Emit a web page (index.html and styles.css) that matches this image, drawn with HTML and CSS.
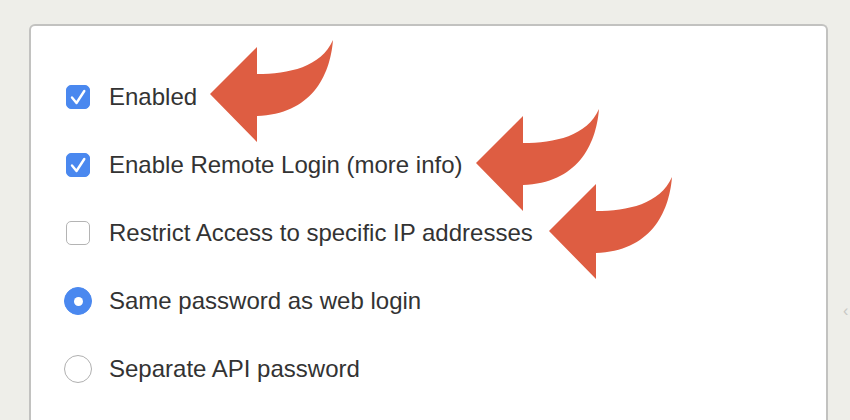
FILE: index.html
```html
<!DOCTYPE html>
<html lang="en">
  <head>
    <meta charset="UTF-8" />
    <title>Remote Login Settings</title>
    <link rel="stylesheet" href="styles.css">
  </head>
  <body>
    <div class="panel">
      <div class="option">
        <span class="check on">
          <svg viewBox="0 0 24 24" width="24" height="24"><path d="M6 12.5 L10.5 18 L18.3 6" fill="none" stroke="#fff" stroke-width="2.4" stroke-linecap="round" stroke-linejoin="round"/></svg>
        </span>
        <span class="label">Enabled</span>
      </div>
      <div class="option">
        <span class="check on">
          <svg viewBox="0 0 24 24" width="24" height="24"><path d="M6 12.5 L10.5 18 L18.3 6" fill="none" stroke="#fff" stroke-width="2.4" stroke-linecap="round" stroke-linejoin="round"/></svg>
        </span>
        <span class="label">Enable Remote Login (more info)</span>
      </div>
      <div class="option">
        <span class="check"></span>
        <span class="label">Restrict Access to specific IP addresses</span>
      </div>
      <div class="option">
        <span class="radio on"></span>
        <span class="label">Same password as web login</span>
      </div>
      <div class="option">
        <span class="radio"></span>
        <span class="label">Separate API password</span>
      </div>

      <!-- callout arrows drawn over the form -->
      <svg class="arrow arrow-1" viewBox="0 0 126 104" width="126" height="104"><path d="M1 55 L48 8 L48 35 C80 35 112 28 124 1 C121 38 102 75 48 77 L48 103 Z"/></svg>
      <svg class="arrow arrow-2" viewBox="0 0 126 104" width="126" height="104"><path d="M1 55 L48 8 L48 35 C80 35 112 28 124 1 C121 38 102 75 48 77 L48 103 Z"/></svg>
      <svg class="arrow arrow-3" viewBox="0 0 126 104" width="126" height="104"><path d="M1 55 L48 8 L48 35 C80 35 112 28 124 1 C121 38 102 75 48 77 L48 103 Z"/></svg>
    </div>
    <span class="edge">&lsaquo;</span>
  </body>
</html>
```
FILE: styles.css
```css
body {
  margin: 0;
  padding: 0;
  background-color: #eeeee9;
  font-family: "Liberation Sans", Arial, sans-serif;
  overflow: hidden;
}
.panel {
  position: relative;
  margin: 24px 0 0 29px;
  width: 799px;
  height: 396px;
  background-color: #fff;
  border: 2px solid #c2c2c0;
  border-bottom: none;
  border-radius: 6px 6px 0 0;
  padding: 37px 0 0 33px;
  box-sizing: border-box;
  display: flex;
  flex-direction: column;
}
.option {
  height: 68px;
  display: flex;
  align-items: center;
  gap: 17px;
}
.label {
  font-size: 24px;
  color: #333;
}
.check,
.radio {
  width: 28px;
  height: 28px;
  display: flex;
  align-items: center;
  justify-content: center;
  position: relative;
}
.check::before {
  content: "";
  position: absolute;
  left: 2px;
  top: 2px;
  width: 24px;
  height: 24px;
  box-sizing: border-box;
  border: 1px solid #b4b4b4;
  border-radius: 5px;
  background: #fff;
}
.check.on::before {
  border-color: #4a88ef;
  background: #4a88ef;
}
.check svg {
  position: relative;
}
.radio::before {
  content: "";
  width: 28px;
  height: 28px;
  box-sizing: border-box;
  border: 1px solid #b0b0b0;
  border-radius: 50%;
  background: #fff;
}
.radio.on::before {
  border-color: #4a88ef;
  background: #4a88ef;
}
.radio.on::after {
  content: "";
  position: absolute;
  left: 9.5px;
  top: 9.5px;
  width: 9px;
  height: 9px;
  border-radius: 50%;
  background: #fff;
}
.arrow {
  position: absolute;
  fill: #de5d42;
}
.arrow-1 {
  left: 178px;
  top: 13px;
}
.arrow-2 {
  left: 444px;
  top: 82px;
}
.arrow-3 {
  left: 517px;
  top: 150px;
}
.edge {
  position: absolute;
  left: 843px;
  top: 302px;
  font-size: 16px;
  color: #c8c8c4;
}
```
